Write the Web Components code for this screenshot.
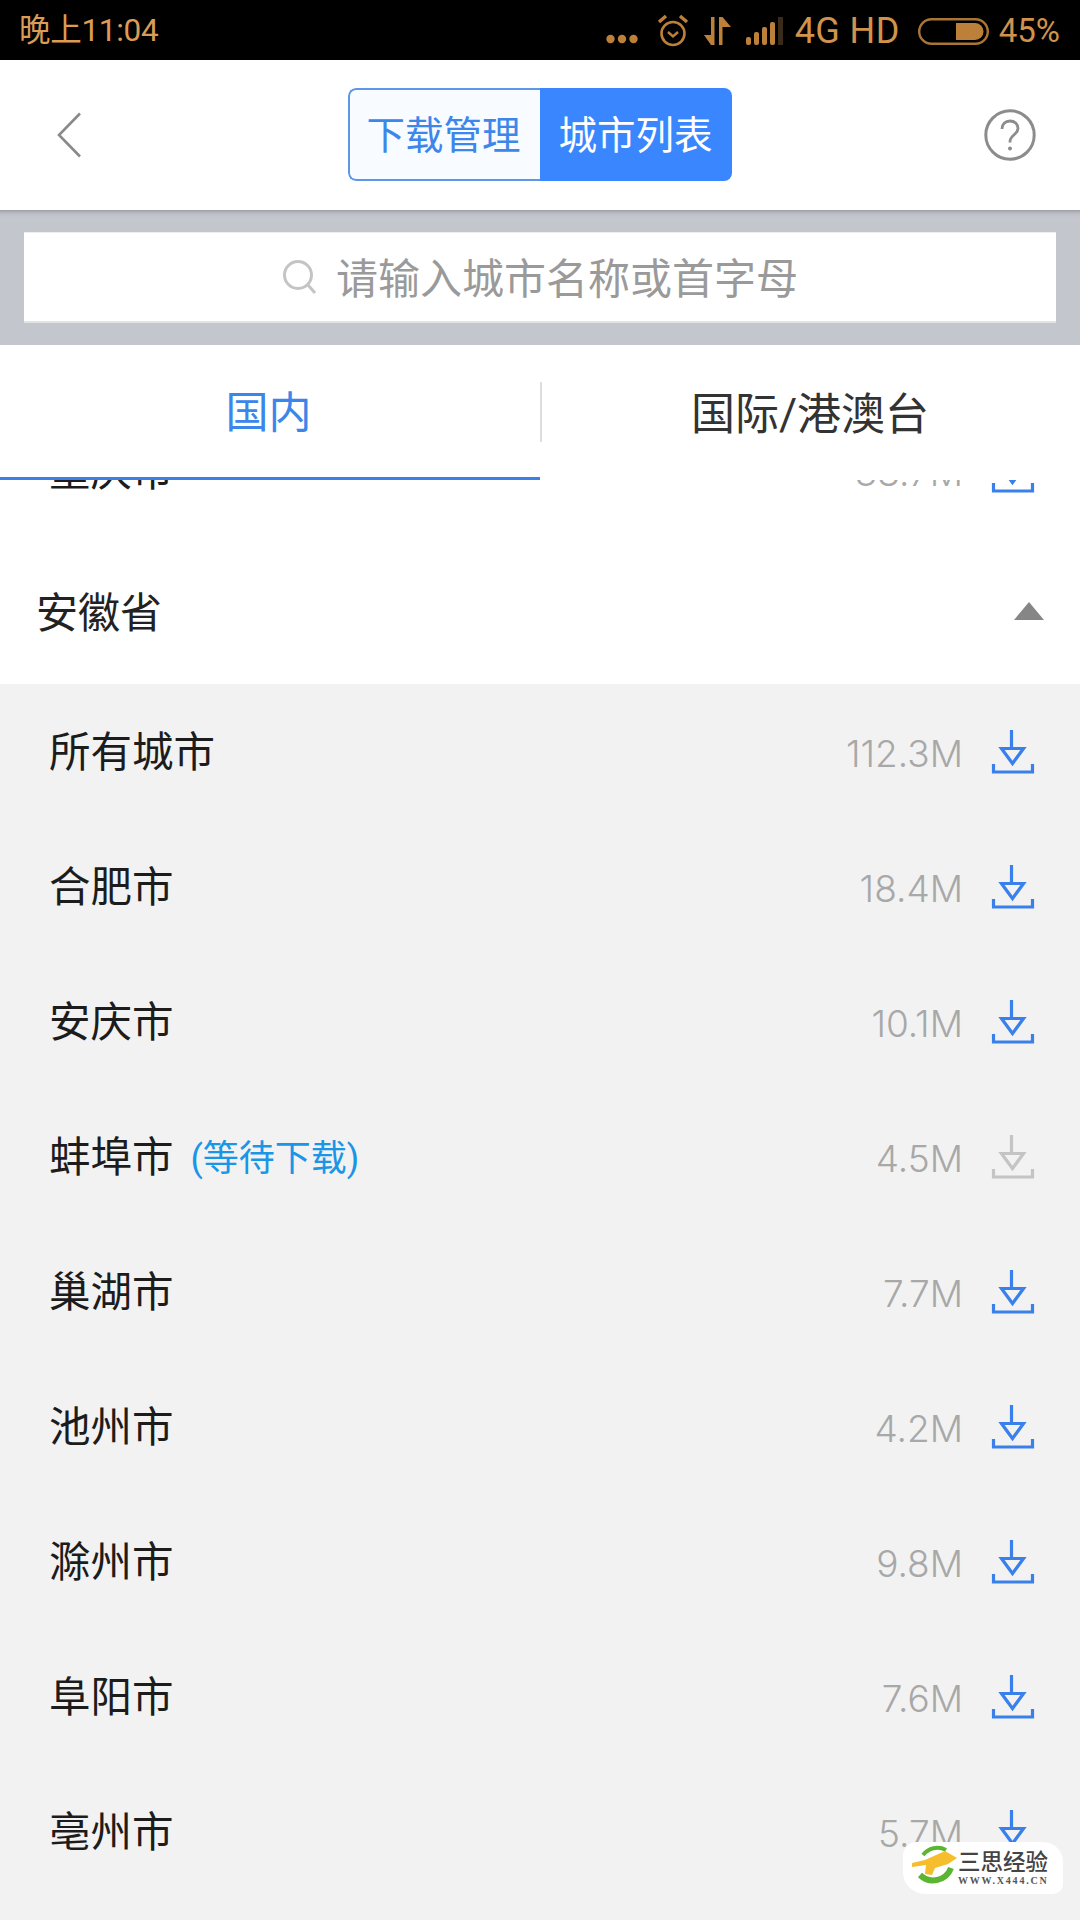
<!DOCTYPE html>
<html lang="zh-CN">
<head>
<meta charset="utf-8">
<title>城市列表</title>
<style>
html,body{margin:0;padding:0;background:#f2f2f2}
body{width:1080px;height:1920px;overflow:hidden;font-family:"Roboto","Noto Sans CJK SC",sans-serif}
</style>
</head>
<body>
<offline-app>
  <status-bar slot="status"></status-bar>
  <nav-bar slot="nav"></nav-bar>
  <search-bar slot="search"></search-bar>
  <region-tabs slot="tabs"></region-tabs>
  <city-list slot="list">
    <city-row name="重庆市" size="38.7M" plain></city-row>
    <province-row name="安徽省"></province-row>
    <city-row name="所有城市" size="112.3M"></city-row>
    <city-row name="合肥市" size="18.4M"></city-row>
    <city-row name="安庆市" size="10.1M"></city-row>
    <city-row name="蚌埠市" size="4.5M" status="(等待下载)" waiting></city-row>
    <city-row name="巢湖市" size="7.7M"></city-row>
    <city-row name="池州市" size="4.2M"></city-row>
    <city-row name="滁州市" size="9.8M"></city-row>
    <city-row name="阜阳市" size="7.6M"></city-row>
    <city-row name="亳州市" size="5.7M"></city-row>
  </city-list>
  <site-watermark slot="overlay"></site-watermark>
</offline-app>
<script>
const CJK='"Roboto","Noto Sans CJK SC",sans-serif';
function def(name,html){
  customElements.define(name,class extends HTMLElement{
    connectedCallback(){
      if(this.shadowRoot)return;
      const r=this.attachShadow({mode:'open'});
      r.innerHTML=typeof html==='function'?html(this):html;
    }
  });
}
def('offline-app',`<style>
:host{display:flex;flex-direction:column;width:1080px;height:1920px;position:relative;overflow:hidden;background:#f2f2f2;font-family:${CJK}}
.list{flex:1;min-height:0;overflow:hidden;display:block}
</style>
<slot name="status"></slot><slot name="nav"></slot><slot name="search"></slot><slot name="tabs"></slot>
<div class="list"><slot name="list"></slot></div>
<slot name="overlay"></slot>`);

def('status-bar',`<style>
:host{display:flex;align-items:center;height:60px;background:#000;color:#d9984f;font-size:33px;padding:2px 20px 0 19px;box-sizing:border-box;flex:none}
.t{line-height:58px;white-space:nowrap}
.time{font-size:31.500px;color:#dc9c55;letter-spacing:-.3px}
.sp{flex:1}
svg{display:block;flex:none}
.net{margin-left:12px;font-size:36px;color:#d1924c;letter-spacing:.4px}
.pct{margin-left:10px;font-size:33px;color:#d1924c}
</style>
<span class="t time">晚上11:04</span><span class="sp"></span>
<svg width="32" height="58" viewBox="0 0 32 58"><g fill="#bd803a"><circle cx="4.500" cy="37" r="4.200"/><circle cx="16" cy="37" r="4.200"/><circle cx="27.500" cy="37" r="4.200"/></g></svg>
<svg style="margin-left:19px" width="32" height="34" viewBox="0 0 32 34" fill="none" stroke="#bd803a"><circle cx="16" cy="19.500" r="11.500" stroke-width="2.600"/><path d="M11 18l5 4.500 5-4.500" stroke-width="2.400"/><path d="M2 8l7-6M30 8l-7-6" stroke-width="3.400"/></svg>
<svg style="margin-left:14px" width="28" height="28" viewBox="0 0 28 28" fill="#bd803a"><path d="M8 0h3.500v28H8zM1 18h7v10zM16 0h3.500v28H16zM19.500 0l8.500 10h-8.500z"/></svg>
<svg style="margin-left:15px" width="37" height="28" viewBox="0 0 37 28"><g fill="#bd803a"><rect x="0" y="20" width="5" height="8" rx="2"/><rect x="8" y="15" width="5" height="13" rx="2"/><rect x="16" y="10" width="5" height="18" rx="2"/><rect x="24" y="5" width="5" height="23" rx="2"/></g><rect x="32" y="0" width="5" height="28" fill="#3a2a18"/></svg>
<span class="t net">4G HD</span>
<svg style="margin-left:18px" width="71" height="27" viewBox="0 0 71 27"><rect x="1.200" y="1.200" width="68.600" height="24.600" rx="12.300" fill="none" stroke="#a87538" stroke-width="2.400"/><path d="M38 5h19a8.500 8.500 0 0 1 0 17H38z" fill="#bd803a"/></svg>
<span class="t pct">45%</span>`);

def('nav-bar',`<style>
:host{display:flex;align-items:center;justify-content:space-between;height:150px;background:#fff;padding:0 44px 0 56px;box-sizing:border-box;flex:none;position:relative;font-family:${CJK}}
.seg{position:absolute;left:348px;top:28px;width:384px;height:93px;display:flex;border-radius:8px;overflow:hidden;font-size:38.500px;box-sizing:border-box}
.seg span{width:192px;display:flex;align-items:center;justify-content:center;box-sizing:border-box;padding-bottom:5px}
.a{background:#f8fbff;color:#3d86ea;border:2px solid #5d97e6;border-right:0;border-radius:8px 0 0 8px;padding-right:3px}
.b{background:#3a86ff;color:#fff;padding-right:1px}
svg{display:block}
</style>
<svg width="26" height="46" viewBox="0 0 26 46" fill="none"><path d="M24 1.500L3 23l21 21.500" stroke="#8a8a8a" stroke-width="2.600"/></svg>
<div class="seg"><span class="a">下载管理</span><span class="b">城市列表</span></div>
<svg width="52" height="52" viewBox="0 0 52 52" fill="none"><circle cx="26" cy="26" r="24.200" stroke="#8c8c8c" stroke-width="3"/><path d="M18 20c0-5 3.500-8 8-8s8 3 8 7.500c0 6-8 6.500-8 13v1" stroke="#8c8c8c" stroke-width="2.800"/><circle cx="26" cy="39.500" r="2" fill="#8c8c8c"/></svg>`);

def('search-bar',`<style>
:host{display:block;height:135px;background:linear-gradient(#9b9ea3 0,#b8bbc1 3px,#c3c7cd 7px);padding:22px 24px 22px;box-sizing:border-box;flex:none;font-family:${CJK}}
.box{height:91px;background:#fff;border-bottom:2px solid #e2e3e6;border-top:1px solid #eceef0;box-sizing:border-box;display:flex;align-items:center;justify-content:center;gap:18px;color:#9a9a9a;font-size:42px}
.box span{padding-bottom:3px}
svg{display:block;flex:none}
</style>
<div class="box"><svg width="36" height="36" viewBox="0 0 36 36" fill="none"><circle cx="16" cy="16" r="13.500" stroke="#c4c4c4" stroke-width="3"/><path d="M26 26l7 8" stroke="#c4c4c4" stroke-width="3"/></svg><span>请输入城市名称或首字母</span></div>`);

def('region-tabs',`<style>
:host{display:flex;height:135px;background:#fff;flex:none;position:relative;z-index:2;font-family:${CJK};font-size:43px}
.tab{width:540px;flex:none;display:flex;align-items:center;justify-content:center;box-sizing:border-box;padding-bottom:4px}
.on{color:#3a86ea;border-bottom:3px solid #3a80e8;padding-right:3px}
.off{color:#333;font-size:44px}
.div{position:absolute;left:540px;top:37px;width:2px;height:60px;background:#dddddd}
</style>
<div class="tab on">国内</div><div class="div"></div><div class="tab off">国际/港澳台</div>`);

def('city-list',`<style>
:host{display:block;margin-top:-77px}
</style><slot></slot>`);

def('province-row',h=>`<style>
:host{display:flex;align-items:center;justify-content:space-between;height:146px;background:#fff;padding:0 36px 0 36px;box-sizing:border-box;font-size:42px;color:#222;font-family:${CJK}}
span{margin-bottom:4px}
svg{display:block}
</style><span>${h.getAttribute('name')}</span>
<svg width="30" height="18" viewBox="0 0 30 18"><path d="M15 0L30 18H0z" fill="#868686"/></svg>`);

def('dl-icon',h=>{const c=h.hasAttribute('muted')?'#c4c4c4':'#3a80ea';return `<style>:host{display:block;width:44px;height:44px;flex:none}svg{display:block}</style>
<svg width="44" height="44" viewBox="0 0 44 44" fill="none" stroke="${c}" stroke-width="3.200"><path d="M20.500 0v19"/><path d="M10.500 18.500h22L21.500 33.500z"/><path d="M2.500 34v8h39v-8"/></svg>`});

def('city-row',h=>{
  const plain=h.hasAttribute('plain'),w=h.hasAttribute('waiting');
  return `<style>
:host{display:flex;align-items:center;height:135px;background:${plain?'#fff':'#f2f2f2'};padding:0 45px 0 49px;box-sizing:border-box;font-family:${CJK}}
.n{font-size:41.500px;color:#1c1c1c;margin-bottom:5px}
.st{font-size:36px;color:#1b95e6;margin-left:17px;margin-bottom:3px}
.sp{flex:1}
.sz{font-family:"Inter","Roboto",sans-serif;font-weight:300;font-size:37px;color:#a8a8a8;margin-right:28px;margin-top:3px}
</style><span class="n">${h.getAttribute('name')}</span>${h.getAttribute('status')?`<span class="st">${h.getAttribute('status')}</span>`:''}<span class="sp"></span><span class="sz">${h.getAttribute('size')}</span><dl-icon ${w?'muted':''}></dl-icon>`});

def('site-watermark',`<style>
:host{position:absolute;left:903px;top:1842px;width:160px;height:52px;background:#fff;border-radius:14px 20px 10px 22px;display:block;font-family:"Noto Sans CJK SC",sans-serif}
svg{position:absolute;left:8px;top:4px;overflow:visible}
.a{position:absolute;left:55px;top:4px;font-size:22.500px;line-height:28px;color:#444;font-weight:500;white-space:nowrap}
.b{position:absolute;left:55px;top:33px;font:bold 10px/12px "Liberation Serif",serif;letter-spacing:1.800px;color:#555;white-space:nowrap}
</style>
<svg width="46" height="44" viewBox="0 0 46 44" fill="none"><path d="M35 4A18 18 0 0 0 12 9" stroke="#5cb531" stroke-width="4"/><path d="M9 29a19 19 0 0 0 31-7" stroke="#5cb531" stroke-width="6"/><path d="M1 17l13-3 20-9 12 7-9 6-13 4-3 7-7-1 1-9-14 2z" fill="#f6bd2c"/></svg>
<span class="a">三思经验</span><span class="b">WWW.X444.CN</span>`);
</script>
</body>
</html>
